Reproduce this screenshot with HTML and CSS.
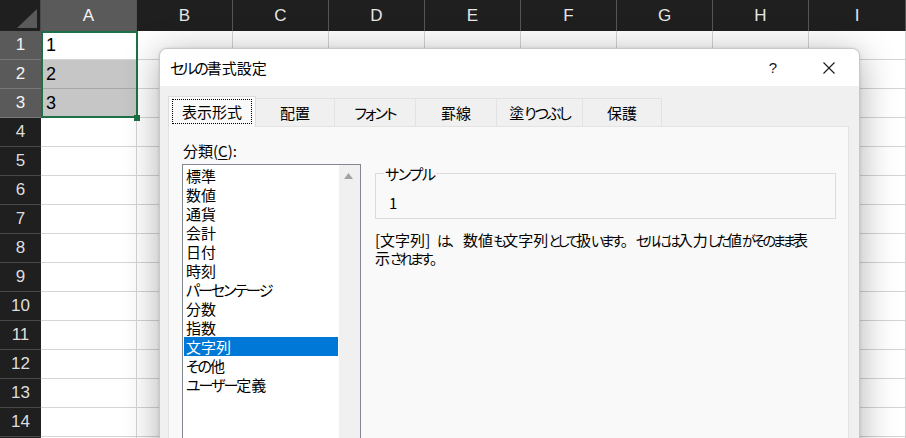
FILE: index.html
```html
<!DOCTYPE html>
<html lang="ja">
<head>
<meta charset="utf-8">
<title>セルの書式設定</title>
<link rel="stylesheet" href="styles.css">
</head>
<body>
<div class="sheet">
  <div class="corner"><svg class="corner-tri" width="41" height="31" viewBox="0 0 41 31"><polygon points="37,9 37,28 17,28" fill="#5a5a5a"/></svg></div>
  <div class="ch sel">A</div><div class="ch">B</div><div class="ch">C</div><div class="ch">D</div><div class="ch">E</div><div class="ch">F</div><div class="ch">G</div><div class="ch">H</div><div class="ch">I</div>

  <div class="rh sel">1</div><div class="c">1</div><div class="c"></div><div class="c"></div><div class="c"></div><div class="c"></div><div class="c"></div><div class="c"></div><div class="c"></div><div class="c"></div>
  <div class="rh sel">2</div><div class="c s">2</div><div class="c"></div><div class="c"></div><div class="c"></div><div class="c"></div><div class="c"></div><div class="c"></div><div class="c"></div><div class="c"></div>
  <div class="rh sel">3</div><div class="c s">3</div><div class="c"></div><div class="c"></div><div class="c"></div><div class="c"></div><div class="c"></div><div class="c"></div><div class="c"></div><div class="c"></div>
  <div class="rh">4</div><div class="c"></div><div class="c"></div><div class="c"></div><div class="c"></div><div class="c"></div><div class="c"></div><div class="c"></div><div class="c"></div><div class="c"></div>
  <div class="rh">5</div><div class="c"></div><div class="c"></div><div class="c"></div><div class="c"></div><div class="c"></div><div class="c"></div><div class="c"></div><div class="c"></div><div class="c"></div>
  <div class="rh">6</div><div class="c"></div><div class="c"></div><div class="c"></div><div class="c"></div><div class="c"></div><div class="c"></div><div class="c"></div><div class="c"></div><div class="c"></div>
  <div class="rh">7</div><div class="c"></div><div class="c"></div><div class="c"></div><div class="c"></div><div class="c"></div><div class="c"></div><div class="c"></div><div class="c"></div><div class="c"></div>
  <div class="rh">8</div><div class="c"></div><div class="c"></div><div class="c"></div><div class="c"></div><div class="c"></div><div class="c"></div><div class="c"></div><div class="c"></div><div class="c"></div>
  <div class="rh">9</div><div class="c"></div><div class="c"></div><div class="c"></div><div class="c"></div><div class="c"></div><div class="c"></div><div class="c"></div><div class="c"></div><div class="c"></div>
  <div class="rh">10</div><div class="c"></div><div class="c"></div><div class="c"></div><div class="c"></div><div class="c"></div><div class="c"></div><div class="c"></div><div class="c"></div><div class="c"></div>
  <div class="rh">11</div><div class="c"></div><div class="c"></div><div class="c"></div><div class="c"></div><div class="c"></div><div class="c"></div><div class="c"></div><div class="c"></div><div class="c"></div>
  <div class="rh">12</div><div class="c"></div><div class="c"></div><div class="c"></div><div class="c"></div><div class="c"></div><div class="c"></div><div class="c"></div><div class="c"></div><div class="c"></div>
  <div class="rh">13</div><div class="c"></div><div class="c"></div><div class="c"></div><div class="c"></div><div class="c"></div><div class="c"></div><div class="c"></div><div class="c"></div><div class="c"></div>
  <div class="rh">14</div><div class="c"></div><div class="c"></div><div class="c"></div><div class="c"></div><div class="c"></div><div class="c"></div><div class="c"></div><div class="c"></div><div class="c"></div>
  <div class="rh"></div><div class="c"></div><div class="c"></div><div class="c"></div><div class="c"></div><div class="c"></div><div class="c"></div><div class="c"></div><div class="c"></div><div class="c"></div>
</div>

<div class="selbox"><span class="handle"></span></div>

<div class="dialog">
  <div class="titlebar">
    <div class="title"><span class="k">セルの</span>書式設定</div>
    <div class="tbtn help">?</div>
    <div class="tbtn close"><svg width="12" height="12" viewBox="0 0 12 12"><path d="M0.5 0.5L11.5 11.5M11.5 0.5L0.5 11.5" stroke="#1a1a1a" stroke-width="1.1" fill="none"/></svg></div>
  </div>
  <div class="dbody">
    <div class="tabs">
      <div class="tab active"><span class="focus">表示形式</span></div>
      <div class="tab w79">配置</div>
      <div class="tab w81"><span class="k">フォント</span></div>
      <div class="tab w81">罫線</div>
      <div class="tab w86">塗<span class="k">りつぶし</span></div>
      <div class="tab w79">保護</div>
    </div>
    <div class="panel">
      <div class="label">分類(<u>C</u>):</div>
      <div class="listbox">
        <ul class="items">
          <li>標準</li>
          <li>数値</li>
          <li>通貨</li>
          <li>会計</li>
          <li>日付</li>
          <li>時刻</li>
          <li><span class="k">パーセンテージ</span></li>
          <li>分数</li>
          <li>指数</li>
          <li class="selected">文字列</li>
          <li><span class="k">その</span>他</li>
          <li><span class="k">ユーザー</span>定義</li>
        </ul>
        <div class="vscroll"><svg width="21" height="20" viewBox="0 0 21 20"><polygon points="5,14 14,14 9.5,8" fill="#a3a3a3"/></svg></div>
      </div>
      <div class="right">
        <fieldset class="sample">
          <legend><span class="ks">サンプル</span></legend>
          <div class="sample-val">1</div>
        </fieldset>
        <p class="desc"><span class="dl1">[文字列]&nbsp; <span class="k">は</span><span class="pu">、</span>数値<span class="k">も</span>文字列<span class="k">として</span>扱<span class="k">います</span><span class="pu">。</span><span class="k">セルには</span>入力<span class="k">した</span>値<span class="k">がそのまま</span>表</span><span class="dl2">示<span class="k">されます</span><span class="pu">。</span></span></p>
      </div>
    </div>
  </div>
</div>
</body>
</html>
```
FILE: styles.css
```css
html, body {
  margin: 0;
  padding: 0;
}
body {
  width: 906px;
  height: 438px;
  overflow: hidden;
  position: relative;
  background: #ffffff;
  font-family: "Liberation Sans", Arial, sans-serif;
}

/* ---------- sheet ---------- */
.sheet {
  display: grid;
  grid-template-columns: 41px repeat(8, 96px) 97px;
  grid-template-rows: 31px repeat(15, 29px);
}
.corner {
  background: #1f1f1f;
  border-right: 1px solid #4a4a4a;
  box-sizing: border-box;
}
.corner-tri {
  display: block;
}
.ch {
  background: #1f1f1f;
  color: #e6e6e6;
  font-size: 17px;
  display: flex;
  align-items: center;
  justify-content: center;
  border-right: 1px solid #555555;
  box-sizing: border-box;
}
.rh {
  background: #1f1f1f;
  color: #dedede;
  font-size: 17px;
  display: flex;
  align-items: center;
  justify-content: center;
  border-bottom: 1px solid #4a4a4a;
  box-sizing: border-box;
}
.ch.sel,
.rh.sel {
  background: #5a5a5a;
  color: #f4f4f4;
}
.rh.sel {
  border-bottom-color: #777777;
}
.c {
  background: #ffffff;
  border-right: 1px solid #d4d4d4;
  border-bottom: 1px solid #d4d4d4;
  box-sizing: border-box;
  font-size: 18px;
  color: #000;
  display: flex;
  align-items: center;
  padding-left: 5px;
}
.c.s {
  background: #c6c6c6;
  border-bottom-color: #a8a8a8;
}

.selbox {
  position: absolute;
  left: 41px;
  top: 31px;
  width: 97px;
  height: 87px;
  box-sizing: border-box;
  border: 2px solid #1e7145;
}
.handle {
  position: absolute;
  right: -4px;
  bottom: -5px;
  width: 6px;
  height: 6px;
  background: #1e7145;
}

/* ---------- dialog ---------- */
.dialog {
  position: absolute;
  left: 159px;
  top: 48px;
  width: 701px;
  height: 420px;
  box-sizing: border-box;
  border: 1px solid #c9c9c9;
  border-radius: 8px 8px 0 0;
  background: #f0f0f0;
  overflow: hidden;
  box-shadow: 0 6px 36px rgba(0, 0, 0, 0.32), 0 0 3px rgba(0, 0, 0, 0.12);
  font-family: "Noto Sans CJK JP", "Noto Sans", sans-serif;
  font-feature-settings: "palt" 1;
  font-size: 15px;
  color: #000;
}
.k {
  letter-spacing: -2px;
}
.ks {
  letter-spacing: -1.3px;
}
.titlebar {
  height: 37px;
  background: #ffffff;
  display: flex;
  align-items: center;
  padding: 0 7px 0 10px;
  gap: 10px;
}
.title {
  flex: 1;
  line-height: 20px;
}
.tbtn {
  width: 46px;
  height: 30px;
  display: flex;
  align-items: center;
  justify-content: center;
}
.help {
  font-family: "Liberation Sans", Arial, sans-serif;
  font-size: 15px;
  color: #1a1a1a;
}
.dbody {
  padding: 10px 10px 0 8px;
}
.tabs {
  display: flex;
  align-items: flex-end;
  height: 30px;
}
.tab {
  height: 28px;
  width: 79px;
  box-sizing: border-box;
  border-top: 1px solid #e2e2e2;
  border-right: 1px solid #e2e2e2;
  background: #f0f0f0;
  display: flex;
  align-items: center;
  justify-content: center;
  line-height: 19px;
}
.tab.w79 { width: 79px; }
.tab.w81 { width: 81px; }
.tab.w86 { width: 86px; }
.tab.active {
  width: 88px;
  height: 31px;
  margin-bottom: -1px;
  border: 1px solid #dcdcdc;
  border-bottom: none;
  background: #f9f9f9;
  position: relative;
  z-index: 1;
  padding: 2px 3px 3px;
}
.focus {
  flex: 1;
  align-self: stretch;
  display: flex;
  align-items: center;
  justify-content: center;
  border: 1px dotted #000;
}
.panel {
  height: 320px;
  box-sizing: border-box;
  background: #f9f9f9;
  border: 1px solid #e3e3e3;
  padding: 14px 12px 0 13px;
  display: grid;
  grid-template-columns: 179px 1fr;
  grid-template-rows: 19px auto;
  column-gap: 14px;
  row-gap: 4px;
}
.label {
  grid-column: 1 / 3;
  line-height: 19px;
  padding-left: 1px;
}
.label u {
  text-decoration-thickness: 1px;
  text-underline-offset: 2px;
}
.listbox {
  height: 290px;
  box-sizing: border-box;
  border: 1px solid #828790;
  background: #ffffff;
  display: flex;
}
.items {
  list-style: none;
  margin: 0;
  padding: 1px 1px 0 1px;
  flex: 1;
}
.items li {
  height: 19px;
  line-height: 19px;
  padding-left: 2px;
  white-space: nowrap;
}
.items li.selected {
  background: #0078d7;
  color: #ffffff;
}
.vscroll {
  width: 21px;
  background: #f0f0f0;
}
.vscroll svg {
  display: block;
}
.right {
  min-width: 0;
}
.sample {
  margin: 0;
  padding: 0 8px 6px 8px;
  border: 1px solid #dcdcdc;
  min-width: 0;
}
.sample legend {
  padding: 0 1px;
  line-height: 19px;
}
.sample-val {
  margin-top: 10px;
  line-height: 19px;
  padding-left: 5px;
}
.desc {
  margin: 12px 0 0;
  line-height: 18px;
}
.desc .k {
  font-size: 14px;
  letter-spacing: -3px;
}
.desc .pu {
  font-feature-settings: normal;
}
.dl1 {
  display: block;
  width: 433px;
  text-align: justify;
  text-align-last: justify;
}
.dl2 {
  display: block;
}
```
